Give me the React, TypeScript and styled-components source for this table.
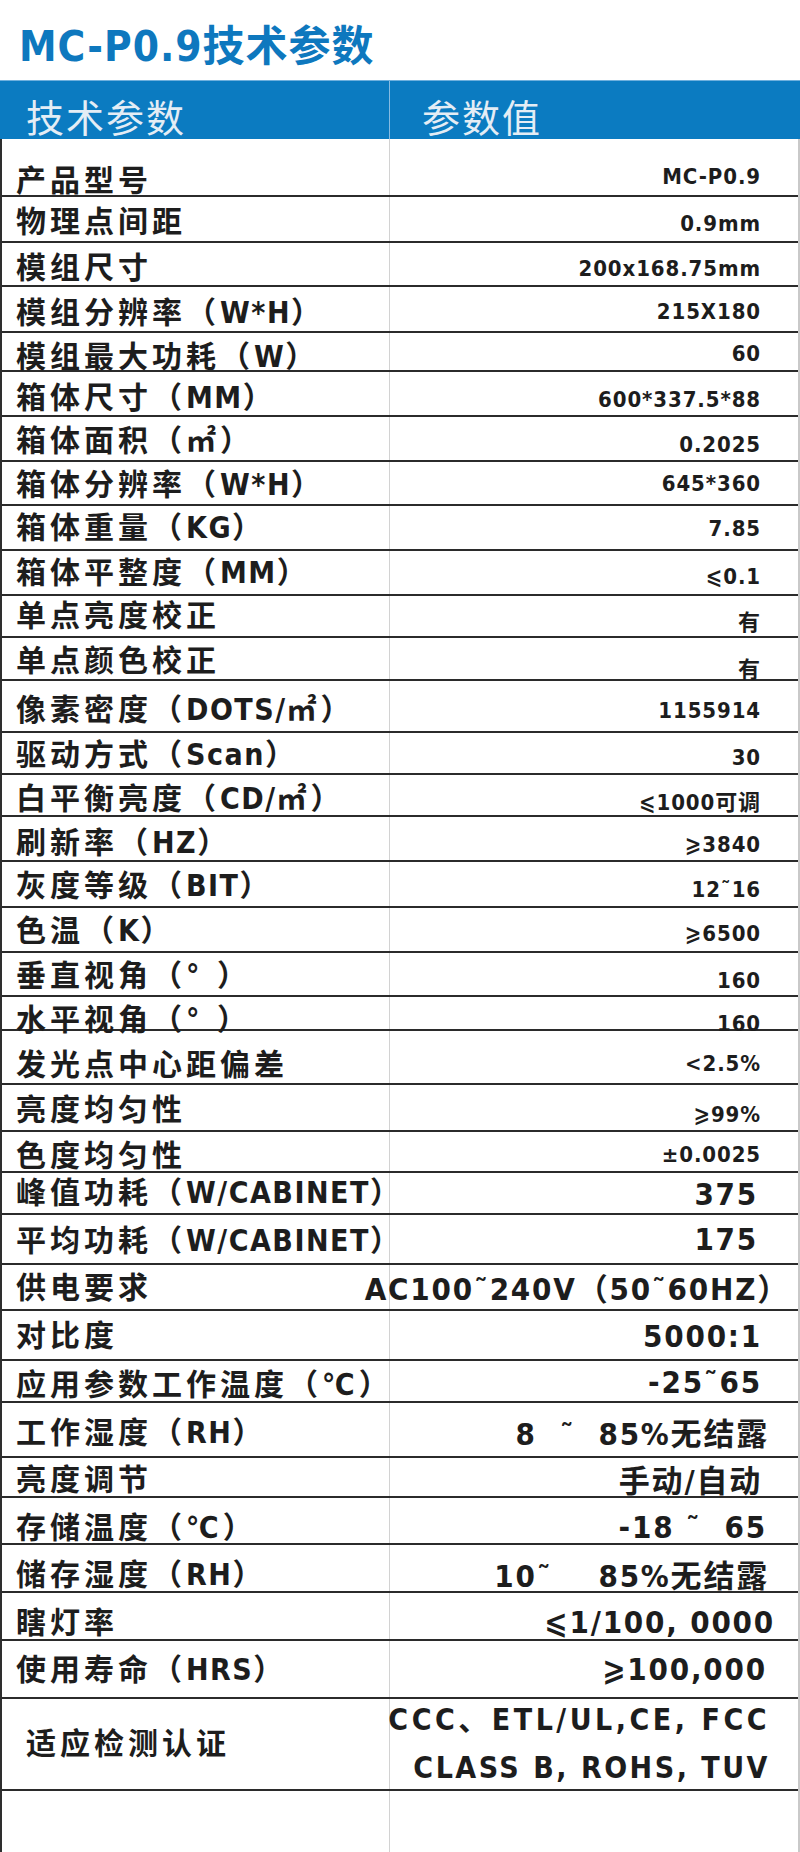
import React from "react";
import styled, { createGlobalStyle } from "styled-components";

const GlobalStyle = createGlobalStyle`
  body {
    margin: 0;
    background: #ffffff;
  }
`;

const FONT = `"Liberation Sans Narrow", "DejaVu Sans Condensed", "Liberation Sans", "Noto Sans CJK SC", sans-serif`;

const Page = styled.div`
  width: 800px;
  font-family: ${FONT};
  color: #1d1d1d;
`;

const TitleBar = styled.div`
  height: 80px;
  box-sizing: border-box;
  display: flex;
  align-items: flex-end;
  padding: 0 0 12px 19px;
`;

const Title = styled.h1`
  margin: 0;
  font-size: 42px;
  line-height: 1;
  font-weight: 700;
  letter-spacing: 1px;
  color: #0e78be;
`;

const HeadRow = styled.div`
  display: grid;
  grid-template-columns: 389px 1fr;
  height: 59px;
  background: #0b7bc1;
  border-top: 1px solid #6fb0de;
  box-sizing: border-box;
`;

const HeadCell = styled.div<{ $pl: number }>`
  display: flex;
  align-items: flex-end;
  padding: 0 0 4px ${(p) => p.$pl}px;
  font-family: "Noto Sans CJK SC", sans-serif;
  font-weight: 400;
  font-size: 38px;
  line-height: 1;
  letter-spacing: 2px;
  color: #e4edf5;

  & + & {
    border-left: 1px solid #86bbe2;
  }
`;

const Table = styled.div`
  border-left: 2px solid #2e2e2e;
  border-right: 2px solid #c9c9c9;
`;

const Row = styled.div<{ $h: number; $last?: boolean }>`
  display: grid;
  grid-template-columns: 387px 1fr;
  height: ${(p) => p.$h}px;
  box-sizing: border-box;
  border-bottom: ${(p) => (p.$last ? "none" : "2px solid #2b2b2b")};
`;

const Label = styled.div<{ $pl: number; $center?: boolean }>`
  display: flex;
  align-items: ${(p) => (p.$center ? "center" : "flex-end")};
  padding-left: ${(p) => p.$pl}px;
  white-space: nowrap;
`;

const Value = styled.div<{ $pr: number; $center?: boolean }>`
  display: flex;
  flex-direction: column;
  justify-content: ${(p) => (p.$center ? "center" : "flex-end")};
  align-items: flex-end;
  padding-right: ${(p) => p.$pr}px;
  border-left: 1px solid #d2d2d2;
  min-width: 0;
`;

const Text = styled.span<{ $size: number; $ls: number; $mb?: number }>`
  display: block;
  font-size: ${(p) => p.$size}px;
  letter-spacing: ${(p) => p.$ls}px;
  font-weight: 700;
  line-height: 1;
  white-space: pre;
  margin-bottom: ${(p) => p.$mb ?? 0}px;
`;

// latin runs inside labels are tracked tighter than the hanzi
const Latin = styled.span`
  letter-spacing: 1.5px;
`;

const CertLine = styled(Text)`
  & + & {
    margin-top: 18px;
  }
`;

type Spec = {
  label: string;
  value: string;
  h: number;
  lb: number;
  vb: number;
  big?: boolean;
  pr?: number;
  pl?: number;
};

const specs: Spec[] = [
  { label: "产品型号", value: "MC-P0.9", h: 58, lb: 4, vb: 12 },
  { label: "物理点间距", value: "0.9mm", h: 46, lb: 9, vb: 11 },
  { label: "模组尺寸", value: "200x168.75mm", h: 44, lb: 7, vb: 10 },
  { label: "模组分辨率（W*H）", value: "215X180", h: 46, lb: 8, vb: 13 },
  { label: "模组最大功耗（W）", value: "60", h: 39, lb: 3, vb: 10 },
  { label: "箱体尺寸（MM）", value: "600*337.5*88", h: 45, lb: 7, vb: 9 },
  { label: "箱体面积（㎡）", value: "0.2025", h: 45, lb: 9, vb: 9 },
  { label: "箱体分辨率（W*H）", value: "645*360", h: 44, lb: 9, vb: 14 },
  { label: "箱体重量（KG）", value: "7.85", h: 45, lb: 11, vb: 14 },
  { label: "箱体平整度（MM）", value: "⩽0.1", h: 45, lb: 11, vb: 11 },
  { label: "单点亮度校正", value: "有", h: 42, lb: 10, vb: 7 },
  { label: "单点颜色校正", value: "有", h: 43, lb: 8, vb: 3 },
  { label: "像素密度（DOTS/㎡）", value: "1155914", h: 52, lb: 11, vb: 14 },
  { label: "驱动方式（Scan）", value: "30", h: 42, lb: 8, vb: 9 },
  { label: "白平衡亮度（CD/㎡）", value: "⩽1000可调", h: 42, lb: 6, vb: 6 },
  { label: "刷新率（HZ）", value: "⩾3840", h: 45, lb: 7, vb: 9 },
  { label: "灰度等级（BIT）", value: "12˜16", h: 46, lb: 10, vb: 10 },
  { label: "色温（K）", value: "⩾6500", h: 45, lb: 10, vb: 11 },
  { label: "垂直视角（° ）", value: "160", h: 44, lb: 9, vb: 8 },
  { label: "水平视角（° ）", value: "160", h: 34, lb: -1, vb: -1 },
  { label: "发光点中心距偏差", value: "<2.5%", h: 54, lb: 8, vb: 13 },
  { label: "亮度均匀性", value: "⩾99%", h: 47, lb: 10, vb: 9 },
  { label: "色度均匀性", value: "±0.0025", h: 41, lb: 5, vb: 10 },
  { label: "峰值功耗（W/CABINET）", value: "375", h: 42, lb: 10, vb: 10, big: true, pr: 40 },
  { label: "平均功耗（W/CABINET）", value: "175", h: 50, lb: 12, vb: 15, big: true, pr: 40 },
  { label: "供电要求", value: "AC100˜240V（50˜60HZ）", h: 46, lb: 11, vb: 11, big: true, pr: 8 },
  { label: "对比度", value: "5000:1", h: 50, lb: 13, vb: 14, big: true, pr: 36 },
  { label: "应用参数工作温度（℃）", value: "-25˜65", h: 42, lb: 6, vb: 10, big: true, pr: 36 },
  { label: "工作湿度（RH）", value: "8  ˜  85%无结露", h: 55, lb: 13, vb: 13, big: true, pr: 29 },
  { label: "亮度调节", value: "手动/自动", h: 40, lb: 6, vb: 6, big: true, pr: 36 },
  { label: "存储温度（℃）", value: "-18 ˜  65", h: 47, lb: 5, vb: 7, big: true, pr: 31 },
  { label: "储存湿度（RH）", value: "10˜    85%无结露", h: 48, lb: 6, vb: 6, big: true, pr: 29 },
  { label: "瞎灯率", value: "⩽1/100, 0000", h: 48, lb: 6, vb: 8, big: true, pr: 23 },
  { label: "使用寿命（HRS）", value: "⩾100,000", h: 58, lb: 17, vb: 19, big: true, pr: 31 },
];

function renderLabel(label: string) {
  return label
    .split(/([A-Za-z*/]+)/)
    .map((part, i) => (i % 2 === 1 ? <Latin key={i}>{part}</Latin> : part));
}

export default function App() {
  return (
    <Page>
      <GlobalStyle />
      <TitleBar>
        <Title>MC-P0.9技术参数</Title>
      </TitleBar>
      <HeadRow>
        <HeadCell $pl={26}>技术参数</HeadCell>
        <HeadCell $pl={32}>参数值</HeadCell>
      </HeadRow>
      <Table>
        {specs.map((s) => {
          const size = s.big ? 31 : 22;
          const ls = s.big ? 1.8 : 0.9;
          return (
            <Row key={s.label} $h={s.h}>
              <Label $pl={s.pl ?? 14}>
                <Text $size={30} $ls={4} $mb={s.lb - 4.5}>
                  {renderLabel(s.label)}
                </Text>
              </Label>
              <Value $pr={s.pr ?? 37}>
                <Text $size={size} $ls={ls} $mb={s.vb - 2 - size * 0.15}>
                  {s.value}
                </Text>
              </Value>
            </Row>
          );
        })}
        <Row $h={92}>
          <Label $pl={24} $center>
            <Text $size={30} $ls={4}>适应检测认证</Text>
          </Label>
          <Value $pr={28} $center>
            <CertLine $size={30} $ls={3.5}>CCC、ETL/UL,CE, FCC</CertLine>
            <CertLine $size={30} $ls={2.5}>CLASS B, ROHS, TUV</CertLine>
          </Value>
        </Row>
        <Row $h={61} $last>
          <Label $pl={14} />
          <Value $pr={37} />
        </Row>
      </Table>
    </Page>
  );
}
